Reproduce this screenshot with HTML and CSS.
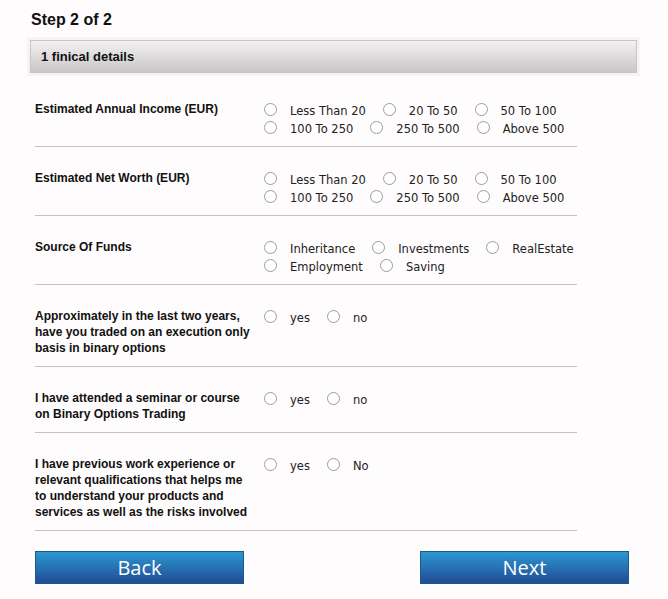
FILE: index.html
```html
<!DOCTYPE html>
<html>
<head>
    <meta name="viewport" content="width=device-width,initial-scale=1.0">
    <title>Step 2 of 2</title>
    <link rel="stylesheet" href="styles.css">
</head>
<body>
    <div class="wrap">
        <h2 class="step">Step 2 of 2</h2>
        <div class="panel-head">1 finical details</div>

        <div class="rows">
            <div class="row">
                <div class="label">Estimated Annual Income (EUR)</div>
                <div class="options">
                    <div class="line">
                        <label class="opt"><input type="radio" name="income">Less Than 20</label>
                        <label class="opt"><input type="radio" name="income">20 To 50</label>
                        <label class="opt"><input type="radio" name="income">50 To 100</label>
                    </div>
                    <div class="line">
                        <label class="opt"><input type="radio" name="income">100 To 250</label>
                        <label class="opt"><input type="radio" name="income">250 To 500</label>
                        <label class="opt"><input type="radio" name="income">Above 500</label>
                    </div>
                </div>
            </div>

            <div class="row">
                <div class="label">Estimated Net Worth (EUR)</div>
                <div class="options">
                    <div class="line">
                        <label class="opt"><input type="radio" name="worth">Less Than 20</label>
                        <label class="opt"><input type="radio" name="worth">20 To 50</label>
                        <label class="opt"><input type="radio" name="worth">50 To 100</label>
                    </div>
                    <div class="line">
                        <label class="opt"><input type="radio" name="worth">100 To 250</label>
                        <label class="opt"><input type="radio" name="worth">250 To 500</label>
                        <label class="opt"><input type="radio" name="worth">Above 500</label>
                    </div>
                </div>
            </div>

            <div class="row">
                <div class="label">Source Of Funds</div>
                <div class="options">
                    <div class="line">
                        <label class="opt"><input type="radio" name="funds">Inheritance</label>
                        <label class="opt"><input type="radio" name="funds">Investments</label>
                        <label class="opt"><input type="radio" name="funds">RealEstate</label>
                    </div>
                    <div class="line">
                        <label class="opt"><input type="radio" name="funds">Employment</label>
                        <label class="opt"><input type="radio" name="funds">Saving</label>
                    </div>
                </div>
            </div>

            <div class="row">
                <div class="label">Approximately in the last two years, have you traded on an execution only basis in binary options</div>
                <div class="options">
                    <div class="line">
                        <label class="opt"><input type="radio" name="traded">yes</label>
                        <label class="opt"><input type="radio" name="traded">no</label>
                    </div>
                </div>
            </div>

            <div class="row">
                <div class="label">I have attended a seminar or course on Binary Options Trading</div>
                <div class="options">
                    <div class="line">
                        <label class="opt"><input type="radio" name="seminar">yes</label>
                        <label class="opt"><input type="radio" name="seminar">no</label>
                    </div>
                </div>
            </div>

            <div class="row">
                <div class="label">I have previous work experience or relevant qualifications that helps me to understand your products and services as well as the risks involved</div>
                <div class="options">
                    <div class="line">
                        <label class="opt"><input type="radio" name="experience">yes</label>
                        <label class="opt"><input type="radio" name="experience">No</label>
                    </div>
                </div>
            </div>
        </div>

        <div class="actions">
            <button class="btn">Back</button>
            <button class="btn">Next</button>
        </div>
    </div>
</body>
</html>
```

FILE: styles.css
```css
* {
    margin: 0;
    padding: 0;
    box-sizing: border-box;
}

body {
    background: #fefcfc;
    font-family: "Liberation Sans", Arial, sans-serif;
    color: #111;
}

.wrap {
    width: 607px;
    margin-left: 30px;
    padding-top: 10px;
}

.step {
    font-size: 16px;
    line-height: 20px;
    font-weight: bold;
    padding-left: 1px;
}

.panel-head {
    margin-top: 10px;
    height: 33px;
    padding-left: 10px;
    line-height: 31px;
    font-size: 13px;
    font-weight: bold;
    border: 1px solid #c6c4c4;
    background: linear-gradient(#f3f1f1, #c8c6c6);
    box-shadow: 0 0 0 3px #f6f3f3;
}

.rows {
    width: 542px;
    margin: 5px 0 0 5px;
}

.row {
    display: flex;
    padding: 24px 0 8px;
    border-bottom: 1px solid #c2c2c2;
}

.label {
    flex-shrink: 0;
    width: 229px;
    margin-top: -1px;
    font-size: 12px;
    line-height: 16px;
    font-weight: bold;
    padding: 0 10px 2px 0;
}

.options {
    font-family: "DejaVu Sans", Tahoma, sans-serif;
    font-size: 11.5px;
    line-height: 18px;
    color: #222;
}

.line {
    display: flex;
    white-space: nowrap;
}

.opt {
    display: flex;
    align-items: center;
    margin-right: 17px;
}

.opt input {
    appearance: none;
    width: 13px;
    height: 13px;
    margin: -3px 13px 0 0;
    border: 1px solid #9c9c9c;
    border-radius: 50%;
    background: #fff;
}

.actions {
    display: flex;
    justify-content: space-between;
    padding: 20px 8px 0 5px;
}

.btn {
    width: 209px;
    height: 33px;
    border: 1px solid #1d578c;
    background: linear-gradient(#2c97cf, #2463a8 70%, #1f4b92);
    color: #fff;
    font-family: "Open Sans", sans-serif;
    font-size: 20px;
    cursor: pointer;
}
```
